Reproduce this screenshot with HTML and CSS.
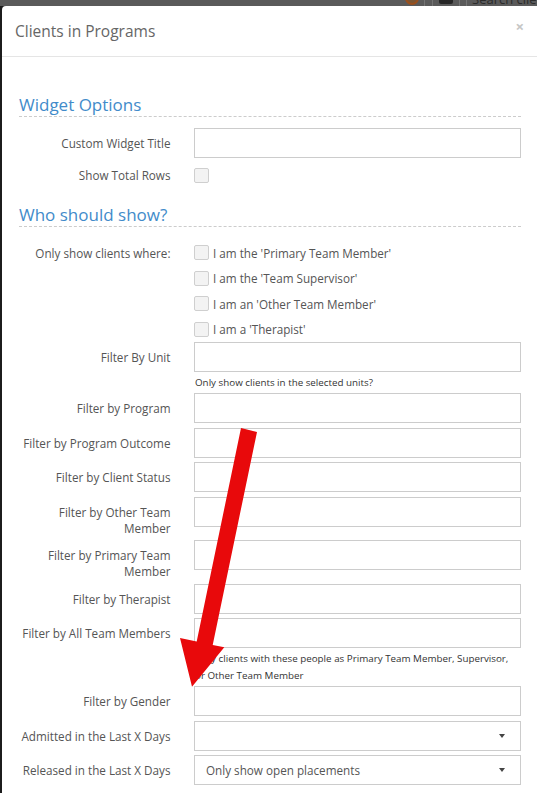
FILE: index.html
```html
<!DOCTYPE html>
<html lang="en">
<head>
    <meta charset="UTF-8">
    <meta name="viewport" content="width=device-width, initial-scale=1.0">
    <title>Clients in Programs</title>
    <link rel="stylesheet" href="styles.css">
</head>
<body>
    <div class="topbar">
        <div class="topbar-items">
            <span class="avatar"></span>
            <span class="divider gap-7"></span>
            <span class="divider"></span>
            <span class="cam-icon"></span>
            <span class="divider"></span>
            <span class="divider"></span>
            <span class="search">Search clients</span>
        </div>
    </div>

    <div class="modal">
        <div class="modal-header">
            <h4 class="modal-title">Clients in Programs</h4>
            <button class="close">&times;</button>
        </div>

        <div class="modal-body">
            <h3 class="section-title">Widget Options</h3>

            <div class="form-row">
                <label class="row-label">Custom Widget Title</label>
                <div class="row-field"><input class="text-input" type="text"></div>
            </div>

            <div class="form-row check-row">
                <label class="row-label">Show Total Rows</label>
                <div class="row-field">
                    <div class="check-item"><input class="check" type="checkbox"></div>
                </div>
            </div>

            <h3 class="section-title second">Who should show?</h3>

            <div class="form-row check-group">
                <label class="row-label">Only show clients where:</label>
                <div class="row-field">
                    <label class="check-item"><input class="check" type="checkbox">I am the 'Primary Team Member'</label>
                    <label class="check-item"><input class="check" type="checkbox">I am the 'Team Supervisor'</label>
                    <label class="check-item"><input class="check" type="checkbox">I am an 'Other Team Member'</label>
                    <label class="check-item"><input class="check" type="checkbox">I am a 'Therapist'</label>
                </div>
            </div>

            <div class="form-row">
                <label class="row-label">Filter By Unit</label>
                <div class="row-field">
                    <input class="text-input" type="text">
                    <p class="help">Only show clients in the selected units?</p>
                </div>
            </div>

            <div class="form-row">
                <label class="row-label">Filter by Program</label>
                <div class="row-field"><input class="text-input" type="text"></div>
            </div>

            <div class="form-row">
                <label class="row-label">Filter by Program Outcome</label>
                <div class="row-field"><input class="text-input" type="text"></div>
            </div>

            <div class="form-row">
                <label class="row-label">Filter by Client Status</label>
                <div class="row-field"><input class="text-input" type="text"></div>
            </div>

            <div class="form-row">
                <label class="row-label">Filter by Other Team<br>Member</label>
                <div class="row-field"><input class="text-input" type="text"></div>
            </div>

            <div class="form-row">
                <label class="row-label">Filter by Primary Team<br>Member</label>
                <div class="row-field"><input class="text-input" type="text"></div>
            </div>

            <div class="form-row">
                <label class="row-label">Filter by Therapist</label>
                <div class="row-field"><input class="text-input" type="text"></div>
            </div>

            <div class="form-row">
                <label class="row-label">Filter by All Team Members</label>
                <div class="row-field">
                    <input class="text-input" type="text">
                    <p class="help">Only clients with these people as Primary Team Member, Supervisor,<br>or Other Team Member</p>
                </div>
            </div>

            <div class="form-row">
                <label class="row-label">Filter by Gender</label>
                <div class="row-field"><input class="text-input" type="text"></div>
            </div>

            <div class="form-row">
                <label class="row-label">Admitted in the Last X Days</label>
                <div class="row-field">
                    <div class="select-wrap">
                        <select class="select">
                            <option></option>
                        </select>
                    </div>
                </div>
            </div>

            <div class="form-row">
                <label class="row-label">Released in the Last X Days</label>
                <div class="row-field">
                    <div class="select-wrap">
                        <select class="select">
                            <option>Only show open placements</option>
                        </select>
                    </div>
                </div>
            </div>
        </div>
    </div>

    <!-- annotation drawn over the form -->
    <svg class="arrow" width="537" height="793" viewBox="0 0 537 793">
        <polygon points="241,428 257,432 212.7,644.9 224.3,647.3 192,686.7 180,638 196.7,641.5" fill="#e8090b"/>
    </svg>
</body>
</html>
```

FILE: styles.css
```css
:root {
    --label-color: #555;
    --help-color: #333;
    --border-color: #ccc;
    --heading-color: #428bca;
    --backdrop: #1c1c1c;
}

html, body {
    margin: 0;
    height: 793px;
    overflow: hidden;
    background-color: var(--backdrop);
    font-family: "Open Sans", "Liberation Sans", sans-serif;
}

body {
    position: relative;
}

/* strip of the page behind the modal */
.topbar {
    height: 6px;
    overflow: hidden;
    background-color: #5a5a5a;
    display: flex;
    justify-content: flex-end;
}

.topbar-items {
    display: flex;
    height: 15px;
    margin-top: -9px;
}

.avatar {
    width: 10px;
    height: 10px;
    border-radius: 50%;
    border: 2px solid #9a4f1c;
    background-color: #7a5532;
    margin-right: 5px;
}

.divider {
    width: 1px;
    background-color: #747474;
    margin-right: 6px;
}

.divider.gap-7 {
    margin-right: 7px;
}

.cam-icon {
    width: 14px;
    height: 12px;
    margin-top: 1px;
    border-radius: 2px;
    background-color: #262626;
    margin-right: 6px;
}

.search {
    width: 65px;
    margin-left: -1px;
    white-space: nowrap;
    overflow: hidden;
    font-size: 13px;
    line-height: 16px;
    color: #2a2a2a;
}

/* modal */
.modal {
    margin-left: 2px;
    min-height: 787px;
    background-color: #fff;
    border-top-left-radius: 4px;
}

.modal-header {
    display: flex;
    justify-content: space-between;
    align-items: center;
    padding: 15px 13px 15px 13px;
    border-bottom: 1px solid #e5e5e5;
}

.modal-title {
    margin: 0;
    font-size: 15.5px;
    line-height: 20px;
    font-weight: 400;
    color: #666;
}

.close {
    align-self: flex-start;
    margin-top: -3px;
    padding: 0;
    border: none;
    background: none;
    font-family: "Open Sans", "Liberation Sans", sans-serif;
    font-size: 15px;
    font-weight: bold;
    line-height: 16px;
    color: #c6c6c6;
    cursor: pointer;
}

.modal-body {
    padding: 37px 16.5px 8px 17px;
}

.section-title {
    margin: 0 0 11px;
    font-size: 17px;
    line-height: 22px;
    font-weight: 400;
    color: var(--heading-color);
    border-bottom: 1px dashed #ccc;
}

.section-title.second {
    margin-top: 18px;
}

.form-row {
    display: grid;
    grid-template-columns: 151.5px 1fr;
    column-gap: 23.5px;
    margin-bottom: 4.5px;
}

.row-label {
    text-align: right;
    white-space: nowrap;
    padding-top: 7px;
    font-size: 11.7px;
    line-height: 16px;
    color: var(--label-color);
}

.text-input {
    display: block;
    width: 100%;
    height: 30px;
    box-sizing: border-box;
    margin: 0;
    border: 1px solid var(--border-color);
    border-radius: 0;
    background-color: #fff;
}

.help {
    margin: 2px 0 -2.5px;
    padding-left: 1px;
    font-size: 9.8px;
    line-height: 17px;
    white-space: nowrap;
    color: var(--help-color);
}

.check-item {
    display: flex;
    align-items: center;
    gap: 4px;
    height: 25.5px;
    font-size: 11.7px;
    color: var(--label-color);
}

.check {
    appearance: none;
    -webkit-appearance: none;
    width: 15px;
    height: 15px;
    margin: 0;
    flex-shrink: 0;
    border: 1px solid #cfcfcf;
    border-radius: 2px;
    background-color: #f3f3f3;
}

.check-row {
    margin-top: 6px;
}

.check-row .row-label {
    padding-top: 3px;
}

.check-row .check-item {
    height: 22px;
}

.check-group {
    margin-top: 13px;
    margin-bottom: 0;
}

.check-group .row-label {
    padding-top: 5px;
}

.select-wrap {
    position: relative;
}

.select-wrap::after {
    content: "";
    position: absolute;
    right: 16px;
    top: 13px;
    border-left: 3.5px solid transparent;
    border-right: 3.5px solid transparent;
    border-top: 4px solid #444;
}

.select {
    appearance: none;
    -webkit-appearance: none;
    display: block;
    width: 100%;
    height: 30px;
    margin: 0;
    padding: 0 24px 0 11px;
    border: 1px solid var(--border-color);
    border-radius: 0;
    background-color: #fff;
    font-family: "Open Sans", "Liberation Sans", sans-serif;
    font-size: 11.7px;
    color: var(--label-color);
}

.arrow {
    position: absolute;
    top: 0;
    left: 0;
    pointer-events: none;
}
```
